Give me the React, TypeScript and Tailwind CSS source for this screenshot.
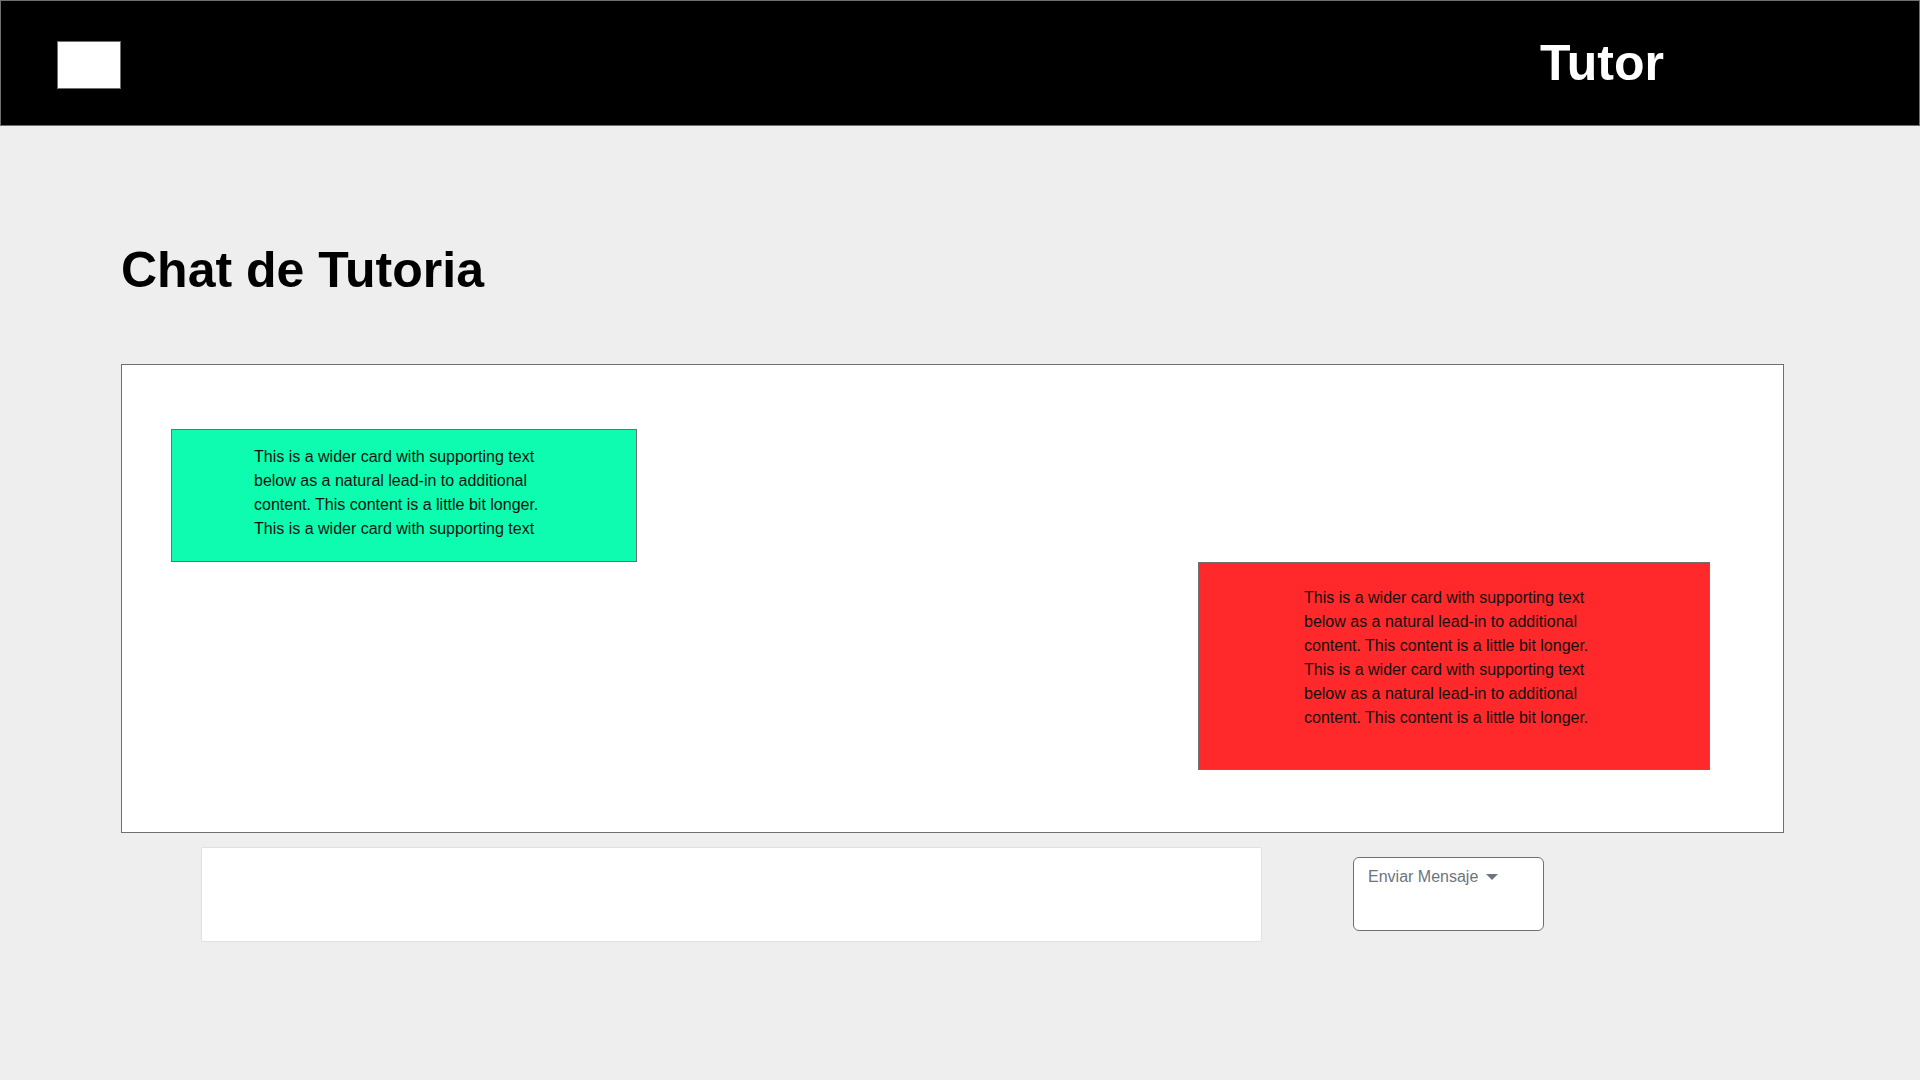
import * as React from "react";

const CARD_TEXT =
  "This is a wider card with supporting text below as a natural lead-in to additional content. This content is a little bit longer.";

export default function App() {
  return (
    <div className="min-h-screen bg-[#eeeeee] font-['Liberation_Sans',Arial,sans-serif] text-black">
      <header className="h-[126px] bg-black border border-[#6f6f6f] flex items-center pl-[56px]">
        <div className="mt-1 w-[64px] h-[48px] bg-white border border-[#6f6f6f]" />
        <h1 className="ml-auto mr-[255px] text-[50px] leading-[50px] font-bold text-white">
          Tutor
        </h1>
      </header>

      <main className="pl-[121px] pr-[136px]">
        <h2 className="pt-[119px] text-[50px] leading-[50px] font-bold">
          Chat de Tutoria
        </h2>

        <section className="mt-[69px] h-[469px] bg-white border border-[#6f6f6f] flex flex-col pt-[64px] pl-[49px] pr-[73px]">
          <Bubble className="w-[466px] h-[133px] bg-[#0dfcaf] pl-[82px] pt-[15px]">
            This is a wider card with supporting text below as a natural
            lead-in to additional content. This content is a little bit longer.
            This is a wider card with supporting text
          </Bubble>

          <Bubble className="self-end w-[512px] h-[208px] bg-[#ff282a] pl-[105px] pt-[23px]">
            {CARD_TEXT} {CARD_TEXT}
          </Bubble>
        </section>

        <div className="mt-[14px] flex items-start">
          <textarea className="ml-[80px] w-[1061px] h-[95px] bg-white border border-[#dee2e6] rounded-[2px] resize-none outline-none" />

          <button className="ml-[91px] mt-[10px] w-[191px] h-[74px] bg-white border border-[#6f6f6f] rounded-[6px] flex items-start pl-[14px] pt-[7px] text-[16px] leading-[24px] text-[#6c757d]">
            Enviar Mensaje
            <span className="ml-[8px] mt-[9px] w-0 h-0 border-x-[6px] border-x-transparent border-t-[6px] border-t-[#6c757d]" />
          </button>
        </div>
      </main>
    </div>
  );
}

function Bubble({
  className,
  children,
}: React.PropsWithChildren<{ className: string }>) {
  return (
    <div className={`shrink-0 border border-[#6f6f6f] ${className}`}>
      <p className="w-[290px] text-[16px] leading-[24px] text-[#111]">
        {children}
      </p>
    </div>
  );
}
